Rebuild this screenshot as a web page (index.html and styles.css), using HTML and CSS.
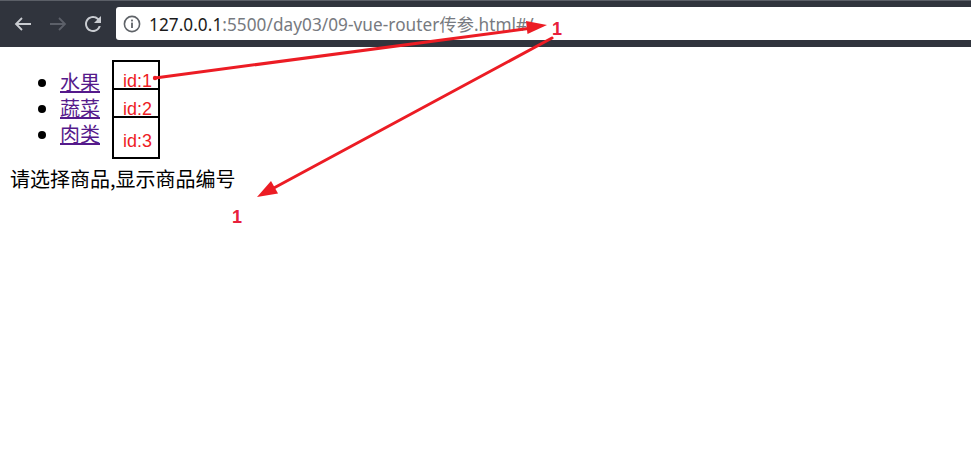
FILE: index.html
```html
<!DOCTYPE html>
<html lang="zh-CN">
<head>
<meta charset="utf-8">
<title>09-vue-router传参</title>
<link rel="stylesheet" href="styles.css">
</head>
<body>
<div class="toolbar">
  <div class="nav">
    <svg class="nav-icon back" width="24" height="24" viewBox="0 0 24 24"><path d="M20 12H5 M11 6L5 12L11 18" fill="none" stroke="currentColor" stroke-width="1.8"/></svg>
    <svg class="nav-icon fwd" width="24" height="24" viewBox="0 0 24 24"><path d="M4 12H19 M13 6L19 12L13 18" fill="none" stroke="currentColor" stroke-width="1.8"/></svg>
    <svg class="nav-icon reload" width="24" height="24" viewBox="0 0 24 24"><path d="M17.65 6.35A7.958 7.958 0 0012 4c-4.42 0-7.99 3.58-7.99 8s3.57 8 7.99 8c3.730 0 6.840-2.550 7.730-6h-2.080A5.990 5.990 0 0112 18c-3.310 0-6-2.690-6-6s2.690-6 6-6c1.660 0 3.140.690 4.220 1.780L13 11h7V4l-2.350 2.350z" fill="currentColor"/></svg>
  </div>
  <div class="omnibox">
    <svg class="info" width="18" height="18" viewBox="0 0 18 18"><circle cx="9" cy="9" r="7.6" fill="none" stroke="#5f6368" stroke-width="1.6"/><rect x="8.1" y="7.6" width="1.8" height="5.4" fill="#5f6368"/><rect x="8.1" y="4.6" width="1.8" height="1.8" fill="#5f6368"/></svg>
    <span class="url"><span class="host">127.0.0.1</span>:5500/day03/09-vue-router传参.html#/</span>
  </div>
</div>
<div class="page">
  <div class="menu">
    <ul class="list">
      <li><a href="#/fruit">水果</a></li>
      <li><a href="#/veg">蔬菜</a></li>
      <li><a href="#/meat">肉类</a></li>
    </ul>
    <div class="ids">
      <div class="id">id:1</div>
      <div class="id">id:2</div>
      <div class="id id-last">id:3</div>
    </div>
  </div>
  <p class="hint">请选择商品,显示商品编号</p>
</div>
<svg class="annot" width="971" height="460" viewBox="0 0 971 460">
  <g stroke="#ec1c24" stroke-width="3" stroke-linecap="round" fill="#ec1c24">
    <line x1="155" y1="78" x2="532" y2="28"/>
    <line x1="552" y1="38" x2="272" y2="189"/>
  </g>
  <g fill="#ec1c24">
    <circle cx="155" cy="78" r="2.2"/>
    <polygon points="547,25 527.5,34 526,21"/>
    <polygon points="257,197 278,193.5 271,181"/>
  </g>
  <text class="label" x="552" y="35">1</text>
  <text class="label" x="232" y="223">1</text>
</svg>
</body>
</html>
```
FILE: styles.css
```css
html, body {
  margin: 0;
  padding: 0;
  background: #fff;
}
body {
  position: relative;
  width: 971px;
  height: 460px;
  overflow: hidden;
  font-family: "Noto Sans CJK SC", "Noto Sans", sans-serif;
}
.toolbar {
  display: flex;
  align-items: center;
  height: 47px;
  box-sizing: border-box;
  background: #30343d;
  border-top: 1px solid #5b5f67;
}
.nav {
  display: flex;
  align-items: center;
  gap: 11px;
  padding-left: 11px;
  margin-top: -1px;
}
.nav-icon {
  display: block;
}
.back { color: #c9ccd1; }
.fwd { color: #5c6069; }
.reload { color: #c9ccd1; }
.omnibox {
  flex: 1;
  display: flex;
  align-items: center;
  height: 33px;
  margin-left: 11px;
  margin-top: -1px;
  background: #fff;
  border-radius: 3px 0 0 3px;
}
.info {
  display: block;
  margin-left: 7px;
}
.url {
  margin-left: 8px;
  font-family: "Noto Sans", "Noto Sans CJK SC", sans-serif;
  font-size: 17.2px;
  color: #777a80;
  white-space: nowrap;
  letter-spacing: 0.05px;
}
.host {
  color: #1b1b1b;
}
.page {
  padding: 0 10px;
}
.menu {
  display: flex;
  align-items: flex-start;
  padding-top: 13px;
}
.list {
  margin: 9px 0 0;
  padding-left: 50px;
  font-size: 20px;
  line-height: 26px;
}
.list li {
  height: 26px;
}
.list a {
  display: inline-block;
  height: 26px;
  line-height: 26px;
  color: #551a8b;
  vertical-align: top;
}
.ids {
  margin-left: 12px;
  display: flex;
  flex-direction: column;
}
.id {
  width: 48px;
  height: 30px;
  box-sizing: border-box;
  border: 2px solid #000;
  padding: 12px 0 0 9px;
  font-family: "Liberation Sans", "Noto Sans CJK SC", sans-serif;
  font-size: 18px;
  line-height: 14px;
  color: #ee1c25;
}
.id + .id {
  margin-top: -2px;
}
.id-last {
  height: 43px;
  padding-top: 16px;
}
.hint {
  margin: 7px 0 0;
  font-size: 20px;
  line-height: 26px;
  color: #000;
}
.annot {
  position: absolute;
  left: 0;
  top: 0;
  pointer-events: none;
}
.label {
  font-family: "Liberation Sans", sans-serif;
  font-weight: bold;
  font-size: 18px;
  fill: #e8203c;
}
```
